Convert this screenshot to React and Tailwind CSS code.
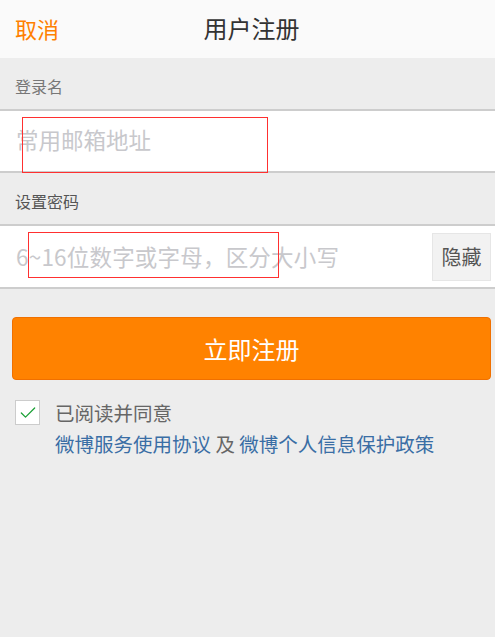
import { Check } from "lucide-react";

export default function App() {
  return (
    <div
      className="w-[495px] h-[637px] bg-[#ededed] overflow-hidden"
      style={{ fontFamily: '"Noto Sans CJK SC", "Noto Sans", sans-serif' }}
    >
      {/* 顶部栏 */}
      <div className="h-[58px] bg-[#fafafa] flex items-center relative">
        <span className="pl-[15px] pb-[2px] text-[22px] text-[#ff8000]">取消</span>
        <span className="absolute left-[8px] right-0 pb-[2px] text-center text-[24px] text-[#333] pointer-events-none">
          用户注册
        </span>
      </div>

      {/* 登录名 */}
      <div className="h-[51px] flex items-center pl-[15px] pt-[4px] text-[16px] text-[#777]">登录名</div>
      <div className="relative h-[64px] bg-white border-y-2 border-[#cdcdcd] flex items-center">
        <span className="pl-[16px] pb-[2px] text-[22.5px] text-[#c8c8cc]">常用邮箱地址</span>
        <div className="absolute left-[22px] top-[6px] w-[246px] h-[56px] border border-[#ff3030]" />
      </div>

      {/* 设置密码 */}
      <div className="h-[51px] flex items-center pl-[15px] pt-[4px] text-[16px] text-[#555]">设置密码</div>
      <div className="relative h-[65px] bg-white border-y-2 border-[#cdcdcd] flex items-center">
        <span className="flex-1 pl-[16px] text-[22.5px] tracking-[0.2px] text-[#c8c8cc]">6~16位数字或字母，区分大小写</span>
        <button className="mr-[4px] w-[59px] h-[48px] bg-[#f2f2f2] border border-[#e6e6e6] text-[20px] text-[#555]">
          隐藏
        </button>
        <div className="absolute left-[28px] top-[6px] w-[251px] h-[46px] border border-[#ff3030]" />
      </div>

      {/* 注册按钮 */}
      <div className="pl-[12px] pr-[4px] pt-[28px]">
        <button className="w-full h-[63px] rounded-[4px] bg-[#ff8200] border border-[#f07000] text-white text-[24px]">
          立即注册
        </button>
      </div>

      {/* 协议 */}
      <div className="flex pl-[15px] pt-[20px] gap-[15px]">
        <div className="w-[25px] h-[25px] bg-white border border-[#cccccc] flex items-center justify-center shrink-0">
          <Check size={20} strokeWidth={1.5} className="text-[#1aa035]" />
        </div>
        <div className="flex flex-col">
          <span className="text-[19.5px] leading-[25px] text-[#666]">已阅读并同意</span>
          <span className="text-[19.5px] leading-[25px] mt-[6px] text-[#3a6ea5]">
            微博服务使用协议 <span className="text-[#666]">及</span> 微博个人信息保护政策
          </span>
        </div>
      </div>
    </div>
  );
}
